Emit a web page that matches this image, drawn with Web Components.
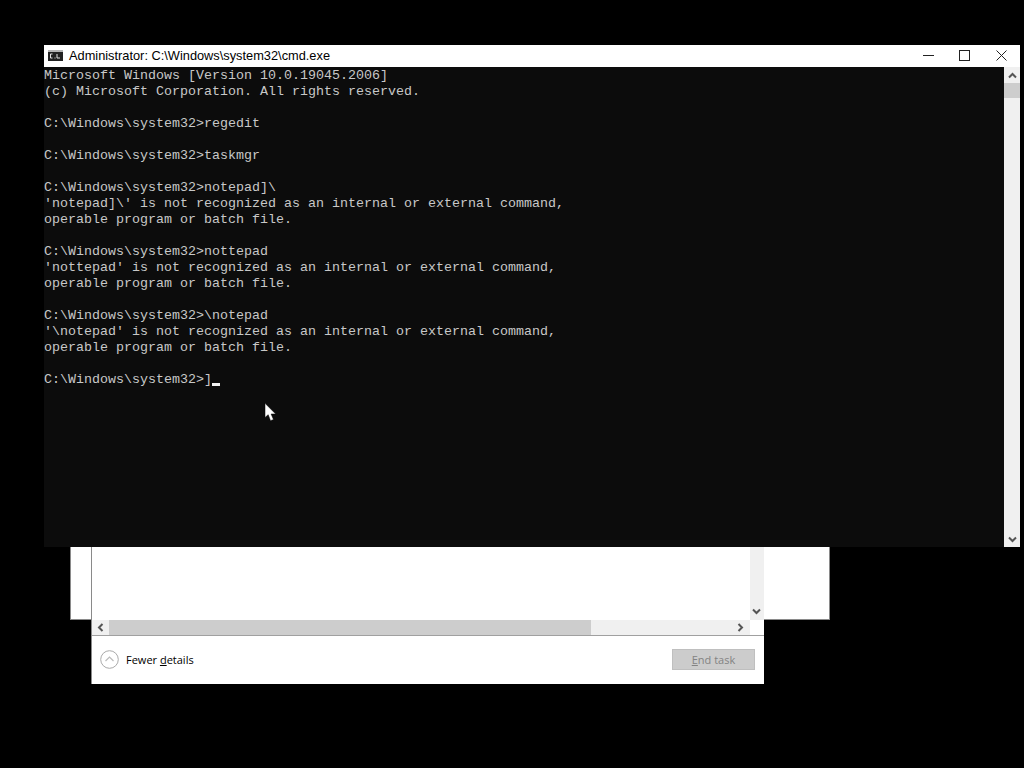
<!DOCTYPE html>
<html>
<head>
<meta charset="utf-8">
<style>
html, body { margin: 0; padding: 0; background: #000; width: 1024px; height: 768px; overflow: hidden; }
</style>
</head>
<body>
<back-window></back-window>
<task-window></task-window>
<cmd-window title="Administrator: C:\Windows\system32\cmd.exe">Microsoft Windows [Version 10.0.19045.2006]
(c) Microsoft Corporation. All rights reserved.

C:\Windows\system32>regedit

C:\Windows\system32>taskmgr

C:\Windows\system32>notepad]\
'notepad]\' is not recognized as an internal or external command,
operable program or batch file.

C:\Windows\system32>nottepad
'nottepad' is not recognized as an internal or external command,
operable program or batch file.

C:\Windows\system32>\notepad
'\notepad' is not recognized as an internal or external command,
operable program or batch file.

C:\Windows\system32>]</cmd-window>
<mouse-cursor></mouse-cursor>

<script>
class BackWindow extends HTMLElement {
    constructor() {
        super();
        this.shadow = this.attachShadow({mode: "open"});
    }
    connectedCallback() {
        this.shadow.innerHTML = `<style>
        :host {
            position: absolute;
            left: 70px;
            top: 500px;
            width: 758px;
            height: 119px;
            background: #fff;
            border: 1px solid #8a8a8a;
            border-top: 0;
        }
        </style>`;
    }
}
customElements.define("back-window", BackWindow);

class TaskWindow extends HTMLElement {
    constructor() {
        super();
        this.shadow = this.attachShadow({mode: "open"});
    }
    connectedCallback() {
        this.shadow.innerHTML = `<style>
        :host {
            position: absolute;
            left: 91px;
            top: 500px;
            width: 672px;
            height: 184px;
            display: flex;
            flex-direction: column;
            background: #fff;
            border-left: 1px solid #8a8a8a;
            font-family: "Open Sans", "Liberation Sans", sans-serif;
        }
        .list {
            height: 120px;
            display: flex;
            justify-content: flex-end;
            flex: none;
        }
        .vbar {
            width: 12px;
            background: #f0f0f0;
            display: flex;
            flex-direction: column;
            justify-content: flex-end;
            align-items: center;
            padding: 0 2px 5px 0;
        }
        .hbar {
            height: 15px;
            display: flex;
            align-items: center;
            background: #f0f0f0;
            margin-right: 14px;
            padding-right: 1px;
            flex: none;
        }
        .hbar .arrow { width: 17px; display: flex; justify-content: center; flex: none; }
        .thumb { width: 482px; height: 15px; background: #cdcdcd; flex: none; }
        .fill { flex: 1; }
        .foot {
            flex: 1;
            border-top: 1px solid #a0a0a0;
            display: flex;
            align-items: center;
            justify-content: space-between;
            padding: 0 9px 1px 8px;
            font-size: 11px;
            color: #000;
        }
        .less { display: flex; align-items: center; gap: 7px; }
        u { text-decoration-thickness: 1px; }
        .end {
            width: 81px;
            height: 19px;
            background: #cccccc;
            border: 1px solid #bfbfbf;
            color: #838383;
            font-size: 11px;
            display: flex;
            align-items: center;
            justify-content: center;
        }
        svg { display: block; }
        </style>
        <div class="list">
            <div class="vbar">
                <svg width="9" height="7" viewBox="0 0 9 7"><path d="M1 1.500l3.500 3.500 3.500-3.500" fill="none" stroke="#555" stroke-width="2"/></svg>
            </div>
        </div>
        <div class="hbar">
            <div class="arrow"><svg width="7" height="9" viewBox="0 0 7 9"><path d="M5.500 1L2 4.500l3.500 3.500" fill="none" stroke="#555" stroke-width="2"/></svg></div>
            <div class="thumb"></div>
            <div class="fill"></div>
            <div class="arrow"><svg width="7" height="9" viewBox="0 0 7 9"><path d="M1.500 1L5 4.500l-3.500 3.500" fill="none" stroke="#555" stroke-width="2"/></svg></div>
        </div>
        <div class="foot">
            <div class="less">
                <svg width="19" height="19" viewBox="0 0 19 19"><circle cx="9.500" cy="9.500" r="8.800" fill="#fff" stroke="#aaa"/><path d="M5.500 11l4-4 4 4" fill="none" stroke="#bbb" stroke-width="1.200"/></svg>
                <span>Fewer <u>d</u>etails</span>
            </div>
            <div class="end"><span><u>E</u>nd task</span></div>
        </div>`;
    }
}
customElements.define("task-window", TaskWindow);

class CmdWindow extends HTMLElement {
    constructor() {
        super();
        this.shadow = this.attachShadow({mode: "open"});
    }
    connectedCallback() {
        let title = this.getAttribute("title");
        this.shadow.innerHTML = `<style>
        :host {
            position: absolute;
            left: 44px;
            top: 45px;
            width: 976px;
            height: 502px;
            display: flex;
            flex-direction: column;
            background: #0c0c0c;
        }
        .titlebar {
            height: 22px;
            background: #fff;
            display: flex;
            align-items: center;
            font-family: "Liberation Sans", sans-serif;
            font-size: 12.8px;
            color: #000;
            flex: none;
            padding-bottom: 2px;
            box-sizing: border-box;
        }
        .appicon { margin: 0 6px 0 4px; display: block; }
        .name { flex: 1; white-space: nowrap; }
        .controls { display: flex; align-items: center; padding-right: 13px; }
        .controls svg { display: block; }
        .controls svg + svg { margin-left: 25px; }
        .controls svg:last-child { margin-left: 26px; }
        .body { flex: 1; display: flex; min-height: 0; }
        .console {
            flex: 1;
            margin: 0;
            padding-top: 1px;
            font-family: "Liberation Mono", monospace;
            font-size: 13.33px;
            line-height: 16px;
            color: #c8c8c8;
            white-space: pre;
            overflow: hidden;
        }
        .caret {
            display: inline-block;
            width: 8px;
            height: 3px;
            background: #f2f2f2;
            vertical-align: -3px;
        }
        .scroll {
            width: 16px;
            background: #f0f0f0;
            display: flex;
            flex-direction: column;
            align-items: center;
            flex: none;
        }
        .scroll .btn { height: 16px; display: flex; align-items: center; justify-content: center; flex: none; }
        .scroll .thumb { width: 100%; height: 15px; background: #cdcdcd; flex: none; }
        .scroll .fill { flex: 1; }
        </style>
        <div class="titlebar">
            <svg class="appicon" width="15" height="11" viewBox="0 0 15 11">
                <rect x="0" y="0" width="15" height="11" fill="#222"/>
                <rect x="0" y="0" width="15" height="2" fill="#b5b5b5"/>
                <path d="M4.500 4H2.500v4h2M6.500 8h1M9 4v4h3" fill="none" stroke="#e4e4e4"/>
            </svg>
            <span class="name">${title}</span>
            <div class="controls">
                <svg width="11" height="11" viewBox="0 0 11 11"><path d="M0 5.500h11" stroke="#222" fill="none"/></svg>
                <svg width="11" height="11" viewBox="0 0 11 11"><rect x="0.500" y="0.500" width="10" height="10" stroke="#222" fill="none"/></svg>
                <svg width="11" height="11" viewBox="0 0 11 11"><path d="M0.500 0.500l10 10M10.500 0.500l-10 10" stroke="#222" fill="none"/></svg>
            </div>
        </div>
        <div class="body">
            <pre class="console"><slot></slot><span class="caret"></span></pre>
            <div class="scroll">
                <div class="btn"><svg width="9" height="7" viewBox="0 0 9 7"><path d="M1 5.500L4.500 2 8 5.500" fill="none" stroke="#555" stroke-width="2"/></svg></div>
                <div class="thumb"></div>
                <div class="fill"></div>
                <div class="btn"><svg width="9" height="7" viewBox="0 0 9 7"><path d="M1 1.500L4.500 5 8 1.500" fill="none" stroke="#555" stroke-width="2"/></svg></div>
            </div>
        </div>`;
    }
}
customElements.define("cmd-window", CmdWindow);

class MouseCursor extends HTMLElement {
    constructor() {
        super();
        this.shadow = this.attachShadow({mode: "open"});
    }
    connectedCallback() {
        this.shadow.innerHTML = `<style>
        :host { position: absolute; left: 264px; top: 403px; display: block; }
        svg { display: block; }
        </style>
        <svg width="12" height="19" viewBox="0 0 12 19"><path d="M1 0.300V14.500l3.200-2.800 2.300 6 3-1.200-2.400-5.500h4.600z" fill="#fff" stroke="#000" stroke-width="0.500"/></svg>`;
    }
}
customElements.define("mouse-cursor", MouseCursor);
</script>
</body>
</html>
